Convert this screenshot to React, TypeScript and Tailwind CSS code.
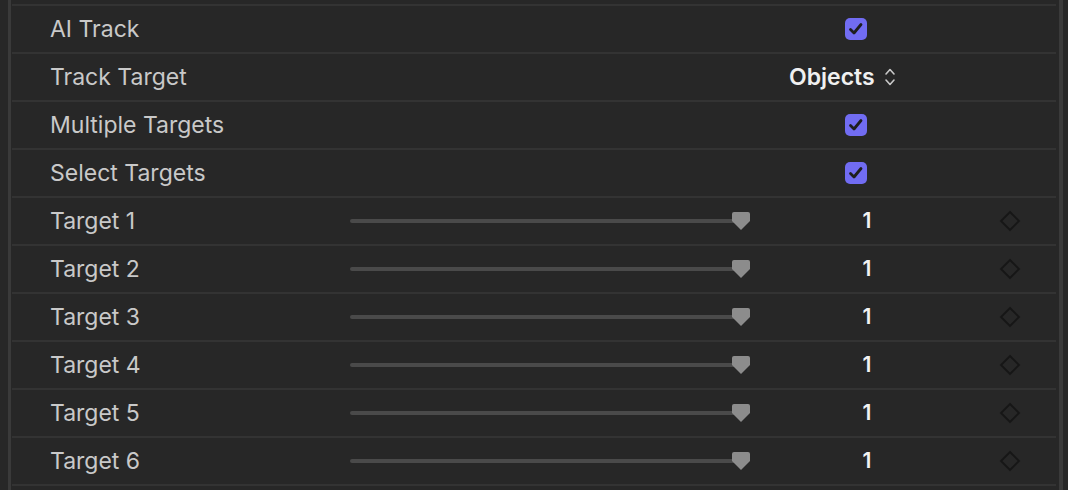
import React from "react";

function Check() {
  return (
    <div className="w-[22px] h-[22px] rounded-[5px] bg-[#716cf2] flex items-center justify-center">
      <svg width="18" height="18" viewBox="0 0 18 18">
        <path d="M3.5 9.5 L7 13 L14 4.5" fill="none" stroke="#1e1e1e" strokeWidth="2.8" strokeLinecap="round" strokeLinejoin="round" />
      </svg>
    </div>
  );
}

function Row({ children, label }: { children?: React.ReactNode; label: string }) {
  return (
    <div className="h-[48px] border-t-2 border-[#333333] flex items-center">
      <div className="w-[338px] pl-[38px] text-[23px] text-[#c9c9c9]">{label}</div>
      {children}
    </div>
  );
}

function SliderRow({ label }: { label: string }) {
  return (
    <Row label={label}>
      <div className="w-[400px] relative h-[20px] flex items-center">
        <div className="h-[4px] w-[388px] rounded-full bg-[#4a4a4a]" />
        <svg className="absolute left-[382px] top-[1px]" width="18" height="18" viewBox="0 0 18 18">
          <path d="M2 0 H16 Q18 0 18 2 V9 L9 18 L0 9 V2 Q0 0 2 0 Z" fill="#8c8c8c" />
        </svg>
      </div>
      <div className="w-[234px] text-center text-[21px] font-semibold text-[#f2f2f2]">1</div>
      <div className="flex-1 flex justify-start pl-[15px]">
        <svg width="22" height="22" viewBox="0 0 22 22">
          <path d="M11 2 L20 11 L11 20 L2 11 Z" fill="none" stroke="#161616" strokeWidth="1.8" />
        </svg>
      </div>
    </Row>
  );
}

export default function App() {
  return (
    <div className="w-[1068px] h-[490px] bg-[#272727] flex overflow-hidden" style={{ fontFamily: "Inter, 'Noto Sans', sans-serif" }}>
      <div className="w-[8px]" />
      <div className="w-[3px] bg-[#3a3a3a]" />
      <div className="w-[1px]" />
      <div className="w-[1044px] pt-[4px] flex flex-col">
        <Row label="AI Track">
          <div className="w-[517px] flex justify-end"><Check /></div>
        </Row>
        <Row label="Track Target">
          <div className="w-[439px]" />
          <div className="flex items-center gap-[9px] text-[23px] font-semibold text-[#f0f0f0]">
            Objects
            <svg width="12" height="22" viewBox="0 0 12 22">
              <path d="M2 8 L6 3.5 L10 8 M2 14 L6 18.5 L10 14" fill="none" stroke="#c8c8c8" strokeWidth="1.6" strokeLinecap="round" strokeLinejoin="round" />
            </svg>
          </div>
        </Row>
        <Row label="Multiple Targets">
          <div className="w-[517px] flex justify-end"><Check /></div>
        </Row>
        <Row label="Select Targets">
          <div className="w-[517px] flex justify-end"><Check /></div>
        </Row>
        {[1, 2, 3, 4, 5, 6].map((n) => (
          <SliderRow key={n} label={`Target ${n}`} />
        ))}
        <div className="border-t-2 border-[#333333]" />
      </div>
      <div className="w-[3px]" />
      <div className="w-[4px] bg-[#3a3a3a]" />
    </div>
  );
}
